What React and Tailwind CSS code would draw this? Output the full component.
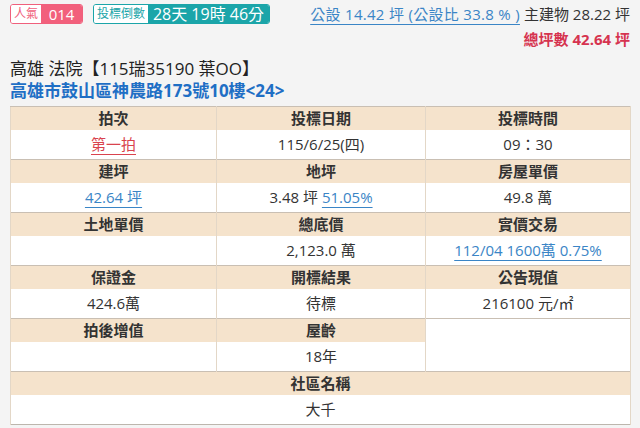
import React from "react";

const F = { fontFamily: '"Open Sans", "Noto Sans CJK TC", sans-serif' };

function H({ children, colSpan, className = "" }) {
  return (
    <td
      colSpan={colSpan}
      className={`h-[23px] bg-[#f5e3cc] border-t border-t-[#c9bfb3] border-x border-x-[#e3d7c7] text-center text-[15px] font-bold text-[#333] leading-none p-0 ${className}`}
    >
      {children}
    </td>
  );
}

function D({ children, colSpan, rowSpan, className = "", h = "h-[30px]" }) {
  return (
    <td
      colSpan={colSpan}
      rowSpan={rowSpan}
      className={`${h} bg-white border-x border-x-[#e3d7c7] text-center text-[15px] text-[#333] leading-none p-0 ${className}`}
    >
      {children}
    </td>
  );
}

const link = "text-[#3a85c6] underline decoration-[#3a85c6] underline-offset-[4px]";

export default function App() {
  return (
    <div className="w-[640px] h-[428px] bg-[#f4f4f4] overflow-hidden" style={F}>
      <div className="flex justify-between px-[10px] pt-[4px] h-[56px]">
        <div className="flex items-start gap-[10px]">
          <div className="flex h-[20px] rounded-[3px] overflow-hidden border border-[#f0607c]">
            <div className="w-[30px] bg-white text-[#f0607c] text-[12px] flex items-center justify-center leading-none">人氣</div>
            <div className="w-[41px] bg-[#f2607c] text-white text-[15px] flex items-center justify-center leading-none">014</div>
          </div>
          <div className="flex h-[20px] rounded-[3px] overflow-hidden border border-[#1ba5a9]">
            <div className="w-[54px] bg-white text-[#1ba5a9] text-[12px] flex items-center justify-center leading-none">投標倒數</div>
            <div className="w-[121px] bg-[#1ba5a9] text-white text-[16px] flex items-center justify-center leading-none">28天 19時 46分</div>
          </div>
        </div>
        <div className="flex flex-col items-end text-[15px] leading-none">
          <div className="mt-[3px] flex items-center">
            <span className="text-[#3a85c6] underline decoration-[#3a85c6] underline-offset-[4px] tracking-[0.3px]">公設 14.42 坪 (公設比 33.8 % )</span>
            <span className="text-[#333] ml-[4px]">主建物 28.22 坪</span>
          </div>
          <div className="mt-[10px] text-[#d6334f] font-bold">總坪數 42.64 坪</div>
        </div>
      </div>
      <div className="px-[10px] mt-[4px] text-[17px] leading-none text-[#222]">高雄 法院【115瑞35190 葉OO】</div>
      <div className="px-[10px] mt-[5px] text-[17px] leading-none text-[#1f6fc5] font-bold">高雄市鼓山區神農路173號10樓&lt;24&gt;</div>
      <div className="px-[10px] mt-[7px]">
        <table className="w-[620px] table-fixed border-collapse border border-[#bdb6ad]">
          <colgroup>
            <col className="w-[206px]" />
            <col className="w-[209px]" />
            <col className="w-[205px]" />
          </colgroup>
          <tbody>
            <tr>
              <H>拍次</H>
              <H>投標日期</H>
              <H>投標時間</H>
            </tr>
            <tr>
              <D><span className="text-[#d9434e] underline decoration-[#d9434e] underline-offset-[4px]">第一拍</span></D>
              <D>115/6/25(四)</D>
              <D>09：30</D>
            </tr>
            <tr>
              <H>建坪</H>
              <H>地坪</H>
              <H>房屋單價</H>
            </tr>
            <tr>
              <D><span className={link}>42.64 坪</span></D>
              <D>3.48 坪 <span className={link}>51.05%</span></D>
              <D>49.8 萬</D>
            </tr>
            <tr>
              <H>土地單價</H>
              <H>總底價</H>
              <H>實價交易</H>
            </tr>
            <tr>
              <D></D>
              <D>2,123.0 萬</D>
              <D><span className={link}>112/04 1600萬 0.75%</span></D>
            </tr>
            <tr>
              <H>保證金</H>
              <H>開標結果</H>
              <H>公告現值</H>
            </tr>
            <tr>
              <D>424.6萬</D>
              <D>待標</D>
              <D>216100 元/㎡</D>
            </tr>
            <tr>
              <H>拍後增值</H>
              <H>屋齡</H>
              <td rowSpan={2} className="bg-white border-t border-t-[#c9bfb3] border-x border-x-[#e3d7c7] p-0"></td>
            </tr>
            <tr>
              <D></D>
              <D>18年</D>
            </tr>
            <tr>
              <H colSpan={3}>社區名稱</H>
            </tr>
            <tr>
              <D colSpan={3}>大千</D>
            </tr>
          </tbody>
        </table>
      </div>
    </div>
  );
}
